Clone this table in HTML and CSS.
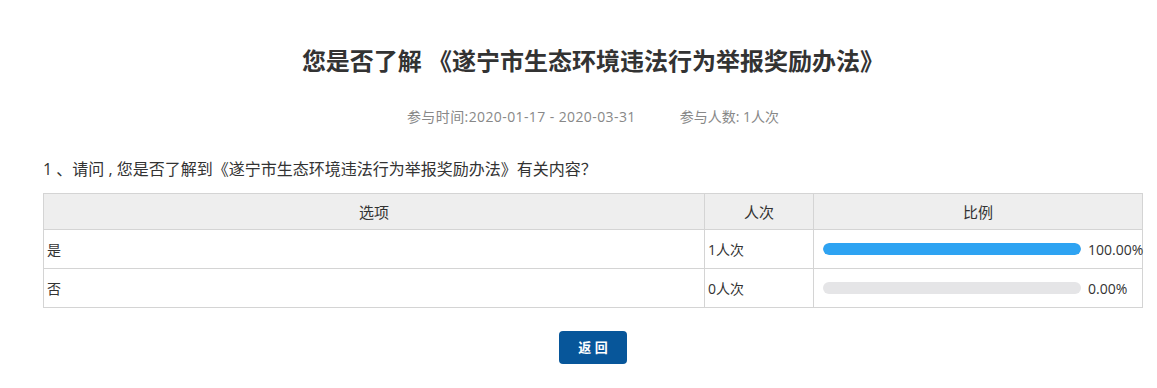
FILE: index.html
```html
<!DOCTYPE html>
<html lang="zh-CN">
<head>
  <meta charset="UTF-8" />
  <title>问卷调查结果</title>
  <link rel="stylesheet" href="styles.css">
</head>
<body>
  <div class="survey">
    <h1 class="survey-title">您是否了解 《遂宁市生态环境违法行为举报奖励办法》</h1>
    <div class="survey-meta">
      <span>参与时间:2020-01-17 - 2020-03-31</span>
      <span>参与人数: 1人次</span>
    </div>

    <div class="question">1 、请问 , 您是否了解到《遂宁市生态环境违法行为举报奖励办法》有关内容<span class="cjk">？</span></div>
    <table class="result-table">
      <thead>
        <tr>
          <th class="col-option">选项</th>
          <th class="col-count">人次</th>
          <th class="col-ratio">比例</th>
        </tr>
      </thead>
      <tbody>
        <tr>
          <td>是</td>
          <td>1人次</td>
          <td><div class="ratio"><span class="bar"><span class="bar-fill" style="width: 100%"></span></span><span class="pct">100.00%</span></div></td>
        </tr>
        <tr>
          <td>否</td>
          <td>0人次</td>
          <td><div class="ratio"><span class="bar"><span class="bar-fill" style="width: 0%"></span></span><span class="pct">0.00%</span></div></td>
        </tr>
      </tbody>
    </table>

    <div class="actions">
      <a href="#" class="btn-back">返 回</a>
    </div>
  </div>
</body>
</html>
```

FILE: styles.css
```css
* {
  box-sizing: border-box;
}

body {
  margin: 0;
  background: #fff;
  color: #333;
  font-family: "Open Sans", "Noto Sans CJK SC", sans-serif;
}

.cjk {
  font-family: "Noto Sans CJK SC", sans-serif;
}

.survey {
  width: 1100px;
  margin-left: 43px;
  padding-top: 42px;
}

.survey-title {
  margin: 0;
  text-align: center;
  font-size: 24px;
  line-height: 38px;
  font-weight: bold;
  color: #333;
}

.survey-meta {
  display: flex;
  justify-content: center;
  gap: 44px;
  margin-top: 27px;
  font-size: 14px;
  line-height: 20px;
  color: #888;
}

.survey-meta span:first-child {
  letter-spacing: 0.4px;
}

.question {
  margin-top: 30px;
  font-size: 16px;
  line-height: 22px;
  color: #333;
}

.result-table {
  width: 100%;
  margin-top: 13px;
  border-collapse: collapse;
  font-size: 14px;
  table-layout: fixed;
}

.result-table th,
.result-table td {
  border: 1px solid #d4d4d4;
  padding: 0 3px;
  text-align: left;
}

.result-table th {
  height: 36px;
  background: #eee;
  font-weight: normal;
  font-size: 15px;
  text-align: center;
}

.result-table td {
  height: 39px;
}

.col-option { width: 661px; }
.col-count { width: 109px; }

.ratio {
  display: flex;
  align-items: center;
  padding-left: 6px;
  white-space: nowrap;
}

.bar {
  display: block;
  flex: none;
  width: 258px;
  height: 12px;
  border-radius: 6px;
  background: #e5e5e7;
  overflow: hidden;
}

.bar-fill {
  display: block;
  height: 100%;
  border-radius: 6px;
  background: #2ea3f2;
}

.pct {
  margin-left: 7px;
}

.actions {
  display: flex;
  justify-content: center;
  margin-top: 23px;
}

.btn-back {
  display: block;
  width: 68px;
  height: 33px;
  line-height: 33px;
  border-radius: 4px;
  background: #07569a;
  color: #fff;
  text-align: center;
  text-decoration: none;
  font-size: 13px;
  font-weight: bold;
}
```
